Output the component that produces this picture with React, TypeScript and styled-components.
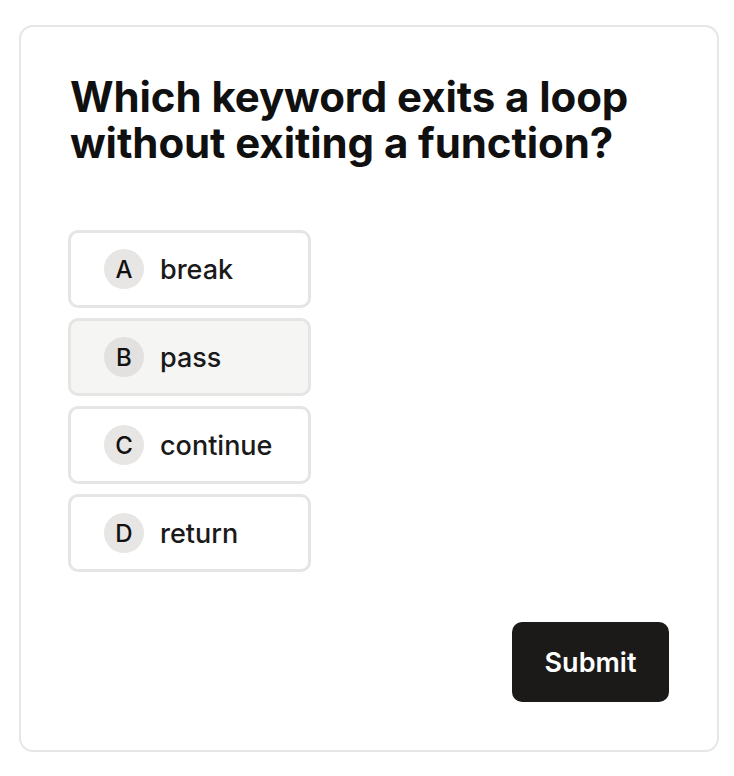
import React, { useState } from "react";
import styled, { createGlobalStyle } from "styled-components";

const Global = createGlobalStyle`
  body {
    margin: 0;
    padding: 25px 15px 0 19px;
    background: #ffffff;
    font-family: Inter, "Noto Sans", sans-serif;
    color: #111111;
  }
`;

const Card = styled.div`
  width: 700px;
  box-sizing: border-box;
  border: 2px solid #e7e6e5;
  border-radius: 14px;
  padding: 47px 48px 48px 47px;
  display: flex;
  flex-direction: column;
`;

const Question = styled.h1`
  margin: 0 0 64px 2px;
  font-size: 42px;
  line-height: 46px;
  font-weight: 700;
  letter-spacing: -0.002em;
  color: #111010;
`;

const Options = styled.div`
  display: flex;
  flex-direction: column;
  gap: 10px;
  align-items: flex-start;
`;

const Option = styled.button<{ $active?: boolean }>`
  width: 243px;
  height: 78px;
  box-sizing: border-box;
  display: flex;
  align-items: center;
  gap: 16px;
  padding: 0 0 0 33px;
  border: 3px solid #e6e5e4;
  border-radius: 10px;
  background: ${(p) => (p.$active ? "#f5f5f4" : "#ffffff")};
  font-family: inherit;
  cursor: pointer;
`;

const Badge = styled.span<{ $active?: boolean }>`
  width: 40px;
  height: 40px;
  border-radius: 50%;
  background: ${(p) => (p.$active ? "#e2e1e0" : "#e7e6e5")};
  display: flex;
  align-items: center;
  justify-content: center;
  font-size: 24px;
  font-weight: 500;
  color: #111;
`;

const Label = styled.span`
  font-size: 27px;
  font-weight: 500;
  color: #1a1a1a;
`;

const Footer = styled.div`
  display: flex;
  justify-content: flex-end;
  margin-top: 50px;
`;

const Submit = styled.button`
  width: 157px;
  height: 80px;
  border: none;
  border-radius: 10px;
  background: #1c1a19;
  color: #ffffff;
  font-family: inherit;
  font-size: 27px;
  font-weight: 600;
  cursor: pointer;
`;

const choices = [
  { key: "A", text: "break" },
  { key: "B", text: "pass" },
  { key: "C", text: "continue" },
  { key: "D", text: "return" },
];

export default function App() {
  const [hover] = useState("B");
  return (
    <>
      <Global />
      <Card>
        <Question>
          Which keyword exits a loop
          <br />
          without exiting a function?
        </Question>
        <Options>
          {choices.map((c) => (
            <Option key={c.key} $active={c.key === hover}>
              <Badge $active={c.key === hover}>{c.key}</Badge>
              <Label>{c.text}</Label>
            </Option>
          ))}
        </Options>
        <Footer>
          <Submit>Submit</Submit>
        </Footer>
      </Card>
    </>
  );
}
